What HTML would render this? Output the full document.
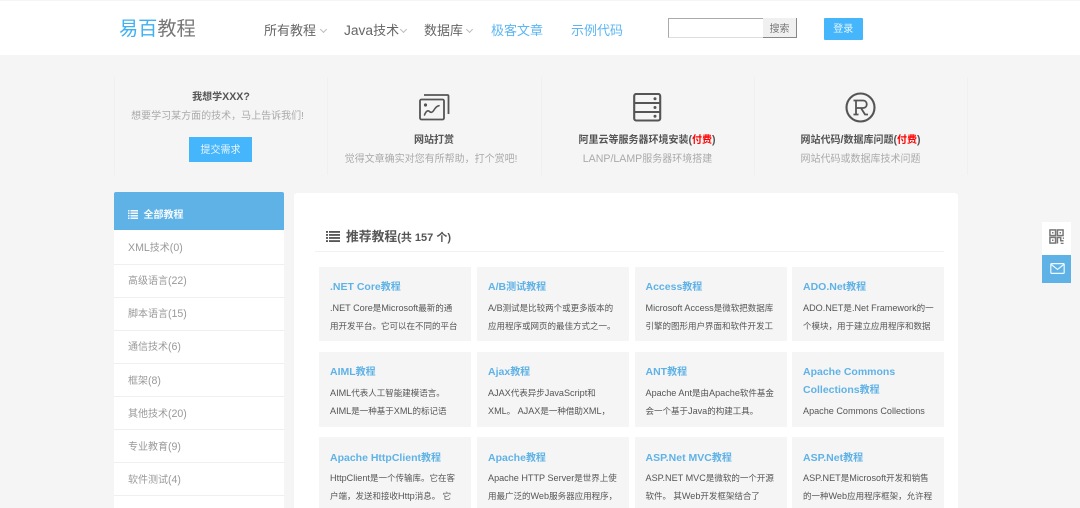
<!DOCTYPE html>
<html lang="zh"><head><meta charset="utf-8"><title>易百教程</title>
<style>
html,body{margin:0;padding:0}
body{width:1080px;height:508px;overflow:hidden;position:relative;background:#f5f5f5;font-family:"Liberation Sans","Noto Sans CJK SC",sans-serif;color:#555}
#w{position:absolute;left:0;top:0;width:1080px;height:508px;overflow:hidden;filter:blur(.3px)}
i{font-style:normal;font-size:1.06em;line-height:1}
.a{position:absolute;white-space:nowrap}
.c{text-align:center;transform:translateX(-50%)}
.hd{position:absolute;left:0;top:1px;width:1080px;height:54px;background:#fff}
.nav{font-size:13px;line-height:18px;top:22px;color:#666}
.nav.b{color:#5cb6f2}
.chev{position:absolute;top:27px;width:4px;height:4px;border-right:1px solid #bbb;border-bottom:1px solid #bbb;transform:rotate(45deg)}
.vl{position:absolute;top:77px;height:98px;width:1px;background:#f0f0f0}
.t1{font-size:10px;font-weight:bold;color:#555;line-height:14px}
.t2{font-size:10px;color:#aaa;line-height:14px}
.side{position:absolute;left:114px;top:230px;width:170px;height:278px;background:#fff}
.si{position:absolute;left:128px;font-size:10px;line-height:14px;color:#999;white-space:nowrap}
.sl{position:absolute;left:114px;width:170px;height:1px;background:#efefef}
.card{position:absolute;width:152px;height:74.500px;background:#f5f5f5;overflow:hidden}
.card b{position:absolute;left:11px;top:12px;width:136px;font-size:10px;line-height:17.500px;color:#5fb2e6;font-weight:bold}
.card b i{font-size:10.500px}
.card p{position:absolute;left:11px;margin:0;white-space:nowrap;font-size:8.500px;line-height:18px;color:#555}
.card p i{font-size:9.100px}
</style></head><body><div id="w">
<div class="hd"></div>
<div class="a" style="left:119px;top:16px;font-size:19.200px;line-height:28px;color:#777"><span style="color:#3fb0f0">易百</span>教程</div>
<div class="a nav" style="left:264px">所有教程</div><div class="chev" style="left:321px"></div>
<div class="a nav" style="left:344px"><i>Java</i>技术</div><div class="chev" style="left:401px"></div>
<div class="a nav" style="left:424px">数据库</div><div class="chev" style="left:467px"></div>
<div class="a nav b" style="left:491px">极客文章</div>
<div class="a nav b" style="left:571px">示例代码</div>
<div style="position:absolute;left:668px;top:18px;width:94px;height:18px;background:#fff;border:1px solid #aaa;border-right:0;border-bottom-color:#ddd"></div>
<div class="a" style="left:763px;top:18px;width:33px;height:19px;background:#f0f0f0;border-right:1px solid #888;border-bottom:1px solid #888;text-align:center;font-size:10px;line-height:23px;color:#777">搜索</div>
<div class="a" style="left:824px;top:18px;width:38.500px;height:22px;background:#45b6fb;border-radius:1px;color:#e8f5ff;text-align:center;font-size:10px;line-height:24px">登录</div>

<div class="vl" style="left:114px"></div><div class="vl" style="left:327px"></div><div class="vl" style="left:541px"></div><div class="vl" style="left:754px"></div><div class="vl" style="left:967px"></div>

<div class="a c t1" style="left:221px;top:91px">我想学<i>XXX?</i></div>
<div class="a c t2" style="left:217.500px;top:110px">想要学习某方面的技术，马上告诉我们!</div>
<div class="a" style="left:189px;top:137px;width:63px;height:25px;background:#45b6fb;color:#e8f5ff;text-align:center;font-size:10px;line-height:28px">提交需求</div>

<svg class="a" style="left:419px;top:94px" width="31" height="27" viewBox="0 0 31 27" fill="none" stroke="#555" stroke-width="1.800">
<path d="M5 1H28.500A1 1 0 0 1 29.500 2V20"/><rect x="1" y="5.500" width="24" height="20" rx="1.500"/>
<path d="M5.500 21c1.500-4 3.500-5 5-3.500s3 1 4.500-1.500 3-4 5-4.300" stroke-width="1.600" stroke-linecap="round"/><circle cx="6.500" cy="11" r="1.600" fill="#555" stroke="none"/>
</svg>
<div class="a c t1" style="left:434px;top:134px">网站打赏</div>
<div class="a c t2" style="left:431px;top:153px">觉得文章确实对您有所帮助，打个赏吧!</div>

<svg class="a" style="left:633px;top:93px" width="29" height="29" viewBox="0 0 29 29" fill="none" stroke="#555" stroke-width="2.100">
<rect x="1.200" y="1" width="26" height="26.500" rx="2"/><path d="M1.500 10H27M1.500 19H27"/>
<circle cx="22" cy="5.800" r="1.500" fill="#555" stroke="none"/><circle cx="22" cy="14.500" r="1.500" fill="#555" stroke="none"/><circle cx="22" cy="23.300" r="1.500" fill="#555" stroke="none"/>
</svg>
<div class="a c t1" style="left:647px;top:134px">阿里云等服务器环境安装<i>(</i><span style="color:#f00">付费</span><i>)</i></div>
<div class="a c t2" style="left:647.500px;top:153px"><i>LANP/LAMP</i>服务器环境搭建</div>

<svg class="a" style="left:845px;top:92px" width="31" height="31" viewBox="0 0 31 31" fill="none" stroke="#555">
<circle cx="15.500" cy="15.500" r="14" stroke-width="2.100"/>
<path d="M8.500 8.500H18c5 0 5 7.500 0 7.500H11.500M11 8.500V22.500M8.500 22.500H13.500M16 16l4 6.500h3" stroke-width="1.800"/>
</svg>
<div class="a c t1" style="left:860.500px;top:134px">网站代码<i>/</i>数据库问题<i>(</i><span style="color:#f00">付费</span><i>)</i></div>
<div class="a c t2" style="left:860.500px;top:153px">网站代码或数据库技术问题</div>

<div class="a" style="left:114px;top:192px;width:170px;height:38px;background:#5fb2e6;border-radius:2px 2px 0 0"></div>
<svg class="a" style="left:128px;top:210px" width="10" height="9" viewBox="0 0 10 9" fill="#f4faff"><rect x="0" y="0" width="1.500" height="1.500"/><rect x="2.500" y="0" width="7.500" height="1.500"/><rect x="0" y="2.500" width="1.500" height="1.500"/><rect x="2.500" y="2.500" width="7.500" height="1.500"/><rect x="0" y="5" width="1.500" height="1.500"/><rect x="2.500" y="5" width="7.500" height="1.500"/><rect x="0" y="7.500" width="1.500" height="1.500"/><rect x="2.500" y="7.500" width="7.500" height="1.500"/></svg>
<div class="a" style="left:143.500px;top:209px;font-size:10px;line-height:14px;font-weight:bold;color:#f4faff">全部教程</div>
<div class="side"></div>
<div class="sl" style="top:264px"></div><div class="sl" style="top:297px"></div><div class="sl" style="top:330px"></div><div class="sl" style="top:363px"></div><div class="sl" style="top:396px"></div><div class="sl" style="top:429px"></div><div class="sl" style="top:462px"></div><div class="sl" style="top:495px"></div>
<div class="si" style="top:242px"><i>XML</i>技术<i>(0)</i></div>
<div class="si" style="top:275px">高级语言<i>(22)</i></div>
<div class="si" style="top:308px">脚本语言<i>(15)</i></div>
<div class="si" style="top:341px">通信技术<i>(6)</i></div>
<div class="si" style="top:375px">框架<i>(8)</i></div>
<div class="si" style="top:408px">其他技术<i>(20)</i></div>
<div class="si" style="top:441px">专业教育<i>(9)</i></div>
<div class="si" style="top:474px">软件测试<i>(4)</i></div>

<div class="a" style="left:294px;top:193px;width:664px;height:315px;background:#fff;border-radius:3px 3px 0 0"></div>
<svg class="a" style="left:325.500px;top:230.500px" width="14" height="11" viewBox="0 0 14 12" preserveAspectRatio="none" fill="#555"><rect x="0" y="0" width="2" height="2"/><rect x="3" y="0" width="11" height="2"/><rect x="0" y="3.300" width="2" height="2"/><rect x="3" y="3.300" width="11" height="2"/><rect x="0" y="6.600" width="2" height="2"/><rect x="3" y="6.600" width="11" height="2"/><rect x="0" y="10" width="2" height="2"/><rect x="3" y="10" width="11" height="2"/></svg>
<div class="a" style="left:346px;top:228px;line-height:18px;font-weight:bold;color:#555"><span style="font-size:12.800px">推荐教程</span><span style="font-size:11px">(共 157 个)</span></div>
<div class="a" style="left:315px;top:251px;width:629px;height:1px;background:#f1f1f1"></div>

<div class="card" style="left:319px;top:266.500px"><b><i>.NET Core</i>教程</b><p style="top:32px"><i>.NET Core</i>是<i>Microsoft</i>最新的通<br>用开发平台。它可以在不同的平台</p></div>
<div class="card" style="left:477px;top:266.500px"><b><i>A/B</i>测试教程</b><p style="top:32px"><i>A/B</i>测试是比较两个或更多版本的<br>应用程序或网页的最佳方式之一。</p></div>
<div class="card" style="left:634.500px;top:266.500px"><b><i>Access</i>教程</b><p style="top:32px"><i>Microsoft Access</i>是微软把数据库<br>引擎的图形用户界面和软件开发工</p></div>
<div class="card" style="left:792px;top:266.500px"><b><i>ADO.Net</i>教程</b><p style="top:32px"><i>ADO.NET</i>是<i>.Net Framework</i>的一<br>个模块，用于建立应用程序和数据</p></div>

<div class="card" style="left:319px;top:352px"><b><i>AIML</i>教程</b><p style="top:32px"><i>AIML</i>代表人工智能建模语言。<br><i>AIML</i>是一种基于<i>XML</i>的标记语</p></div>
<div class="card" style="left:477px;top:352px"><b><i>Ajax</i>教程</b><p style="top:32px"><i>AJAX</i>代表异步<i>JavaScript</i>和<br><i>XML</i>。 <i>AJAX</i>是一种借助<i>XML</i>，</p></div>
<div class="card" style="left:634.500px;top:352px"><b><i>ANT</i>教程</b><p style="top:32px"><i>Apache Ant</i>是由<i>Apache</i>软件基金<br>会一个基于<i>Java</i>的构建工具。</p></div>
<div class="card" style="left:792px;top:352px"><b><i>Apache Commons Collections</i>教程</b><p style="top:50px"><i>Apache Commons Collections</i></p></div>

<div class="card" style="left:319px;top:437px;height:71px"><b style="top:13px"><i>Apache HttpClient</i>教程</b><p style="top:32px"><i>HttpClient</i>是一个传输库。它在客<br>户端，发送和接收<i>Http</i>消息。 它</p></div>
<div class="card" style="left:477px;top:437px;height:71px"><b style="top:13px"><i>Apache</i>教程</b><p style="top:32px"><i>Apache HTTP Server</i>是世界上使<br>用最广泛的<i>Web</i>服务器应用程序，</p></div>
<div class="card" style="left:634.500px;top:437px;height:71px"><b style="top:13px"><i>ASP.Net MVC</i>教程</b><p style="top:32px"><i>ASP.NET MVC</i>是微软的一个开源<br>软件。 其<i>Web</i>开发框架结合了</p></div>
<div class="card" style="left:792px;top:437px;height:71px"><b style="top:13px"><i>ASP.Net</i>教程</b><p style="top:32px"><i>ASP.NET</i>是<i>Microsoft</i>开发和销售<br>的一种<i>Web</i>应用程序框架，允许程</p></div>

<div class="a" style="left:1042px;top:222px;width:28.500px;height:33px;background:#fff"></div>
<svg class="a" style="left:1049px;top:229px" width="15" height="15" viewBox="0 0 16 16" fill="none" stroke="#777" stroke-width="1.600"><rect x="1" y="1" width="6" height="6"/><rect x="9" y="1" width="6" height="6"/><rect x="1" y="9" width="6" height="6"/><path d="M9 15.500V9H12.500V12.500H15.500M15.500 9V10.500M12.500 15.500H15.500"/><rect x="3.200" y="3.200" width="1.600" height="1.600" fill="#777" stroke="none"/><rect x="11.200" y="3.200" width="1.600" height="1.600" fill="#777" stroke="none"/><rect x="3.200" y="11.200" width="1.600" height="1.600" fill="#777" stroke="none"/></svg>
<div class="a" style="left:1042px;top:255px;width:28.500px;height:28px;background:#5fb2e6"></div>
<svg class="a" style="left:1049.500px;top:263px" width="15" height="11" viewBox="0 0 16 12" fill="none" stroke="#f0f9ff" stroke-width="1.300"><rect x=".7" y=".7" width="14.600" height="10.600" rx="1"/><path d="M1 1.500L8 7L15 1.500"/></svg>
</div></body></html>
